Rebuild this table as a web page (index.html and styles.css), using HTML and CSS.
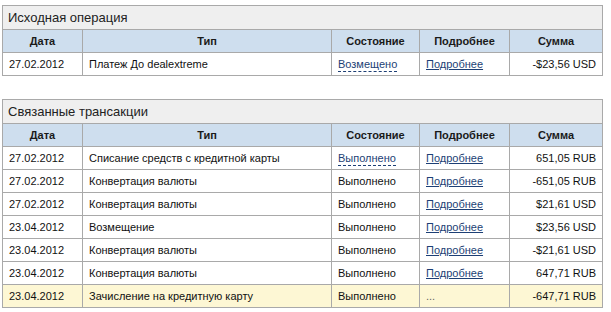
FILE: index.html
```html
<!DOCTYPE html>
<html lang="ru">
<head>
<meta charset="utf-8">
<link rel="stylesheet" href="styles.css">
</head>
<body>
<div class="page">
  <table class="grid">
    <colgroup>
      <col class="c-date"><col class="c-type"><col class="c-state"><col class="c-more"><col class="c-sum">
    </colgroup>
    <tr class="title"><td colspan="5">Исходная операция</td></tr>
    <tr class="head"><th>Дата</th><th>Тип</th><th>Состояние</th><th>Подробнее</th><th>Сумма</th></tr>
    <tr>
      <td>27.02.2012</td><td>Платеж До dealextreme</td>
      <td><span class="dash">Возмещено</span></td>
      <td><a href="#">Подробнее</a></td>
      <td class="num">-$23,56 USD</td>
    </tr>
  </table>

  <table class="grid">
    <colgroup>
      <col class="c-date"><col class="c-type"><col class="c-state"><col class="c-more"><col class="c-sum">
    </colgroup>
    <tr class="title"><td colspan="5">Связанные трансакции</td></tr>
    <tr class="head"><th>Дата</th><th>Тип</th><th>Состояние</th><th>Подробнее</th><th>Сумма</th></tr>
    <tr>
      <td>27.02.2012</td><td>Списание средств с кредитной карты</td>
      <td><span class="dash">Выполнено</span></td>
      <td><a href="#">Подробнее</a></td>
      <td class="num">651,05 RUB</td>
    </tr>
    <tr>
      <td>27.02.2012</td><td>Конвертация валюты</td>
      <td>Выполнено</td>
      <td><a href="#">Подробнее</a></td>
      <td class="num">-651,05 RUB</td>
    </tr>
    <tr>
      <td>27.02.2012</td><td>Конвертация валюты</td>
      <td>Выполнено</td>
      <td><a href="#">Подробнее</a></td>
      <td class="num">$21,61 USD</td>
    </tr>
    <tr>
      <td>23.04.2012</td><td>Возмещение</td>
      <td>Выполнено</td>
      <td><a href="#">Подробнее</a></td>
      <td class="num">$23,56 USD</td>
    </tr>
    <tr>
      <td>23.04.2012</td><td>Конвертация валюты</td>
      <td>Выполнено</td>
      <td><a href="#">Подробнее</a></td>
      <td class="num">-$21,61 USD</td>
    </tr>
    <tr>
      <td>23.04.2012</td><td>Конвертация валюты</td>
      <td>Выполнено</td>
      <td><a href="#">Подробнее</a></td>
      <td class="num">647,71 RUB</td>
    </tr>
    <tr class="hl">
      <td>23.04.2012</td><td>Зачисление на кредитную карту</td>
      <td>Выполнено</td>
      <td class="dots">...</td>
      <td class="num">-647,71 RUB</td>
    </tr>
  </table>
</div>
</body>
</html>
```
FILE: styles.css
```css
html, body {
  margin: 0;
  padding: 0;
  background: #ffffff;
}
.page {
  padding: 5px 0 0 2px;
  display: flex;
  flex-direction: column;
  gap: 23px;
  font-family: "Liberation Sans", Arial, sans-serif;
  font-size: 11px;
  color: #111;
}
.grid {
  border-collapse: collapse;
  width: 600px;
  table-layout: fixed;
}
.c-date { width: 80px; }
.c-type { width: 249px; }
.c-state { width: 88px; }
.c-more { width: 90px; }
.c-sum { width: 93px; }
.grid td, .grid th {
  border: 1px solid #a9a9a9;
  height: 22px;
  padding: 0 6px;
  white-space: nowrap;
  overflow: hidden;
}
.grid tr.title td {
  background: #efefef;
  font-size: 13px;
  color: #222;
  height: 23px;
  padding: 0 5px;
}
.grid th {
  background: #cedeee;
  font-weight: bold;
  font-size: 11px;
  text-align: center;
  color: #1a1a1a;
}
.grid td.num { text-align: right; }
.grid a {
  color: #1d3f75;
  text-decoration: underline;
}
.dash {
  color: #1d3f75;
  border-bottom: 1px dashed #1d3f75;
  padding-bottom: 1px;
}
.grid tr.hl td { background: #fdf7d4; }
.grid td.dots { color: #666; }
```
